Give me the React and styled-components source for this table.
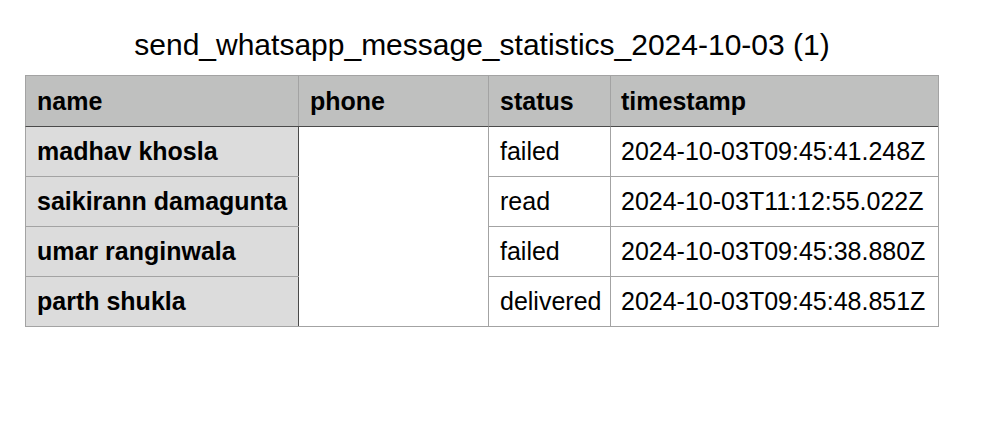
import React from "react";
import styled, { createGlobalStyle } from "styled-components";

const GlobalStyle = createGlobalStyle`
  body {
    margin: 0;
    background: #fff;
    font-family: "Liberation Sans", Arial, sans-serif;
    color: #000;
  }
`;

const Page = styled.div`
  width: 1000px;
  height: 436px;
  padding: 0 0 0 25px;
  box-sizing: border-box;
`;

const Title = styled.h1`
  margin: 0;
  width: 914px;
  height: 75px;
  padding-top: 27px;
  box-sizing: border-box;
  text-align: center;
  font-size: 30px;
  font-weight: 400;
  line-height: 36px;
  white-space: nowrap;
`;

const Grid = styled.div`
  display: grid;
  grid-template-columns: 273px 190px 122px 328px;
  width: max-content;
  border-right: 1px solid #a3a3a3;
  border-bottom: 1px solid #a3a3a3;
`;

const Cell = styled.div`
  height: ${(p) => (p.$head ? 51 : 50)}px;
  box-sizing: border-box;
  display: flex;
  align-items: center;
  padding-left: ${(p) => p.$pad ?? 11}px;
  font-size: 25px;
  font-weight: ${(p) => (p.$bold ? 700 : 400)};
  white-space: nowrap;
  overflow: hidden;
  background: ${(p) => p.$bg || "#fff"};
  border-left: 1px solid ${(p) => (p.$darkLeft ? "#4a4a4a" : "#a3a3a3")};
  border-top: 1px solid ${(p) => (p.$darkTop ? "#4a4a4a" : p.$noTop ? "transparent" : "#a3a3a3")};
`;

const rows = [
  ["madhav khosla", "failed", "2024-10-03T09:45:41.248Z"],
  ["saikirann damagunta", "read", "2024-10-03T11:12:55.022Z"],
  ["umar ranginwala", "failed", "2024-10-03T09:45:38.880Z"],
  ["parth shukla", "delivered", "2024-10-03T09:45:48.851Z"],
];

const headers = ["name", "phone", "status", "timestamp"];

export default function App() {
  return (
    <Page>
      <GlobalStyle />
      <Title>send_whatsapp_message_statistics_2024-10-03 (1)</Title>
      <Grid>
        {headers.map((h) => (
          <Cell key={h} $head $bold $bg="#bfc0bf" $pad={h === "timestamp" ? 10 : 11}>
            {h}
          </Cell>
        ))}
        {rows.map(([name, status, ts], i) => (
          <React.Fragment key={name}>
            <Cell $bold $bg="#dcdcdc" $darkTop={i === 0}>
              {name}
            </Cell>
            <Cell $darkLeft $darkTop={i === 0} $noTop={i > 0} />
            <Cell $darkTop={i === 0}>{status}</Cell>
            <Cell $darkTop={i === 0} $pad={10}>
              {ts}
            </Cell>
          </React.Fragment>
        ))}
      </Grid>
    </Page>
  );
}
